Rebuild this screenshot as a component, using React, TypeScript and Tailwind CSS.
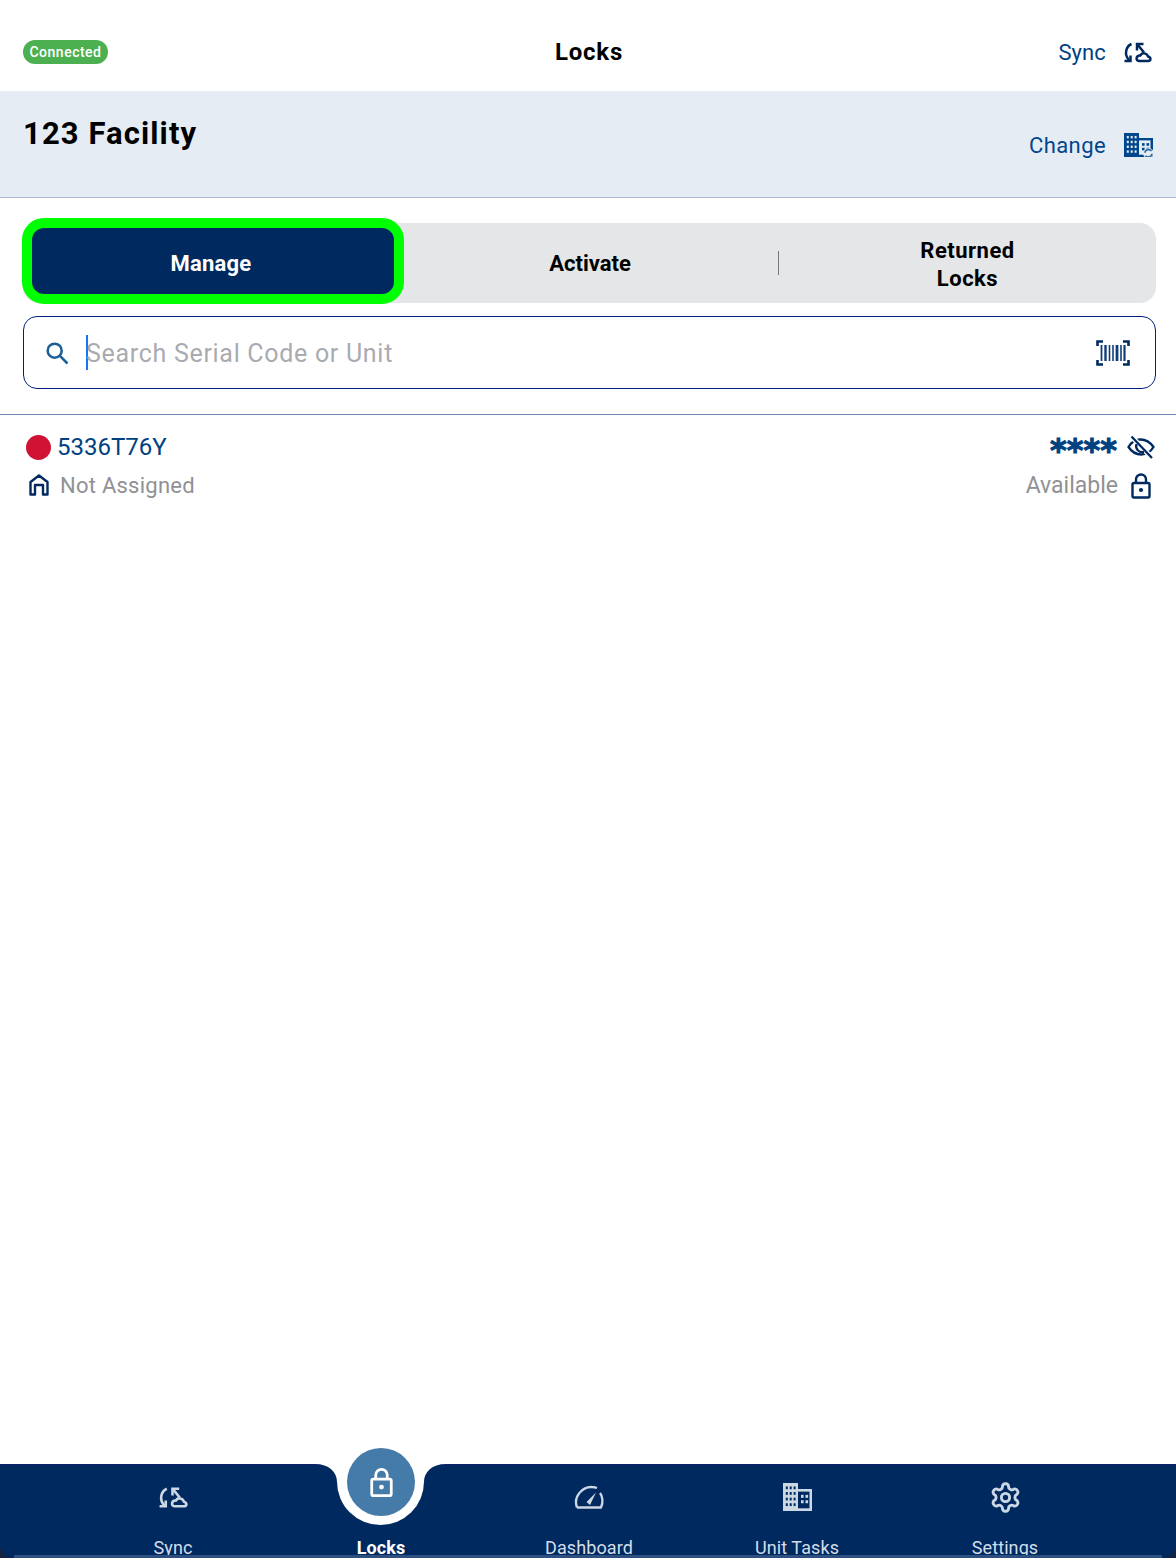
import React from "react";

const font = { fontFamily: '"Roboto", "Liberation Sans", sans-serif' };

function SyncIcon({ className }: { className?: string }) {
  return (
    <svg viewBox="0 0 29 21" className={className} fill="none" stroke="currentColor" strokeWidth="2.5" strokeLinejoin="round">
      <path d="M8.5 2 C3 4.5 0.5 12.5 6.5 18.5" />
      <path d="M1.5 19 H7.5 V13.5" strokeLinejoin="miter" />
      <path d="M20.5 2 H14 V8.5" strokeLinejoin="miter" />
      <path d="M14.5 2.5 L21 10.5" />
      <path d="M16.5 19 H25 C28 19 28.5 15.5 25 14.5 C24 11 19 10 17.5 13.5 C13 13 12 19 16.5 19 Z" />
    </svg>
  );
}

function BuildingIcon({ className, badge }: { className?: string; badge?: boolean }) {
  const cells: React.ReactNode[] = [];
  for (let r = 0; r < 4; r++)
    for (let c = 0; c < 3; c++)
      cells.push(<rect key={`${r}-${c}`} x={2.8 + c * 3.9} y={3.2 + r * 5.2} width="2" height="2.6" fill="var(--bg)" />);
  return (
    <svg viewBox="0 0 29 26" preserveAspectRatio="none" className={className} fill="currentColor">
      <path d="M0 0 H15 V5.5 H29 V26 H0 Z" />
      {cells}
      <rect x="15" y="8" width="11.5" height="15.5" fill="var(--bg)" />
      <rect x="18" y="11" width="2.6" height="2.8" />
      <rect x="22.5" y="11" width="2.6" height="2.8" />
      <rect x="18" y="16" width="2.6" height="2.8" />
      <rect x="22.5" y="16" width="2.6" height="2.8" />
      {badge && (
        <g fill="none" stroke="#2f6a9f" strokeWidth="1.7">
          <circle cx="24.5" cy="22" r="5.5" fill="var(--bg)" stroke="none" />
          <path d="M21 21.5 A3.6 3.6 0 0 1 27.5 19.5" />
          <path d="M28 22.5 A3.6 3.6 0 0 1 21.5 24.5" />
        </g>
      )}
    </svg>
  );
}

function LockIcon({ className }: { className?: string }) {
  return (
    <svg viewBox="0 0 20 26" className={className} fill="none" stroke="currentColor" strokeWidth="2.4" strokeLinejoin="round">
      <rect x="1.5" y="10" width="17" height="14.5" rx="1.5" />
      <path d="M5 10 V6.5 A5 5 0 0 1 15 6.5 V10" />
      <circle cx="10" cy="17" r="2.1" fill="currentColor" stroke="none" />
    </svg>
  );
}

function TabItem({ label, children, bold }: { label: string; children?: React.ReactNode; bold?: boolean }) {
  return (
    <div className="flex flex-col items-center w-[208px] h-full pt-[17px]">
      <div className="h-[30px] flex items-center justify-center">{children}</div>
      <span className={`mt-[26px] text-[18px] leading-[20px] tracking-[0.1px] ${bold ? "font-bold text-white" : "text-[#d3dde9]"}`}>{label}</span>
    </div>
  );
}

export default function App() {
  return (
    <div style={font} className="relative w-[1176px] h-[1558px] bg-white overflow-hidden flex flex-col">
      <header className="h-[91px] shrink-0 flex items-center justify-between pl-[23px] pr-[24px] pt-[13px] relative">
        <span className="bg-[#4caf50] text-white text-[14px] tracking-[0.5px] leading-[24px] h-[24px] w-[85px] rounded-full text-center font-medium">Connected</span>
        <span className="absolute left-0 right-0 text-center text-[24px] tracking-[0.8px] pl-[2px] font-bold text-black pointer-events-none">Locks</span>
        <div className="flex items-center gap-[17px] text-[#00417f]">
          <span className="text-[22px] tracking-[0.1px]">Sync</span>
          <SyncIcon className="w-[29px] h-[21px] text-[#002a5f]" />
        </div>
      </header>

      <section className="h-[107px] shrink-0 bg-[#e5ecf3] border-b border-[#b0bdd0] flex justify-between pl-[23px] pr-[23px]">
        <h1 className="text-[31px] leading-[38px] tracking-[1.1px] font-bold text-black mt-[24px]">123 Facility</h1>
        <div className="flex items-center gap-[18px] text-[#00468c] h-[30px] mt-[39px]" style={{ ["--bg" as string]: "#e5ecf3" }}>
          <span className="text-[22px] tracking-[0.4px]">Change</span>
          <BuildingIcon badge className="w-[29px] h-[24px] text-[#00468c]" />
        </div>
      </section>

      <div className="mt-[25px] ml-[23px] mr-[20px] h-[80px] rounded-[16px] bg-[#e5e6e8] flex items-center relative">
        <button className="absolute left-[-1px] top-[-5px] w-[382px] h-[86px] rounded-[22px] bg-[#002a5f] border-[10px] border-[#00ff00] text-white text-[22px] tracking-[0.2px] font-bold pt-[4px] pr-[4px]">Manage</button>
        <div className="w-[379px] shrink-0" />
        <div className="w-[376px] text-center text-[22px] font-bold text-black">Activate</div>
        <div className="w-px h-[24px] bg-[#77797c]" />
        <div className="flex-1 text-center text-[22px] leading-[28px] tracking-[0.5px] font-bold text-black pt-[3px]">Returned<br />Locks</div>
      </div>

      <div className="mt-[13px] ml-[23px] mr-[20px] h-[73px] rounded-[14px] border-[1.5px] border-[#00207f] flex items-center pl-[19px] pr-[25px]">
        <svg viewBox="0 0 24 24" className="w-[28px] h-[28px] text-[#1f5f97]" fill="none" stroke="currentColor" strokeWidth="2.2">
          <circle cx="10" cy="10" r="6" />
          <path d="M14.5 14.5 L21 21" />
        </svg>
        <div className="w-[2px] h-[35px] bg-[#1477f0] ml-[15px]" />
        <span className="flex-1 text-[25px] text-[#a9abb1] tracking-[0.7px] -ml-[2px] mt-[2px]">Search Serial Code or Unit</span>
        <svg viewBox="0 0 34 26" className="w-[34px] h-[26px] text-[#002a5f]" fill="none" stroke="currentColor" strokeWidth="2.6">
          <path d="M7 1.5 H1.5 V6 M27 1.5 H32.5 V6 M7 24.5 H1.5 V20 M27 24.5 H32.5 V20" />
          <g stroke="#0f3f7a">
            <path d="M5.5 5 V21" strokeWidth="1.8" /><path d="M9.5 5 V21" strokeWidth="2.4" /><path d="M13.5 5 V21" strokeWidth="1.6" />
            <path d="M17 5 V21" strokeWidth="1.6" /><path d="M21 5 V21" strokeWidth="2.8" /><path d="M25 5 V21" strokeWidth="1.6" /><path d="M28.5 5 V21" strokeWidth="2.2" />
          </g>
        </svg>
      </div>

      <div className="mt-[25px] h-px bg-[#6c8bb0] shrink-0" />

      <div className="flex justify-between pl-[26px] pr-[21px] pt-[17px]">
        <div className="flex flex-col">
          <div className="flex items-center h-[30px] gap-[6px]">
            <span className="w-[25px] h-[25px] rounded-full bg-[#d01234]" />
            <span className="text-[24px] text-[#00417f]">5336T76Y</span>
          </div>
          <div className="flex items-center h-[28px] mt-[9px] gap-[11px] pl-[3px]">
            <svg viewBox="0 0 20 22" className="w-[20px] h-[22px] text-[#002a5f]" fill="none" stroke="currentColor" strokeWidth="2.4" strokeLinejoin="round">
              <path d="M1.5 20.5 V8 L10 1.5 L18.5 8 V20.5 H14 V11 H6 V20.5 Z" />
            </svg>
            <span className="text-[22px] tracking-[0.25px] text-[#909194]">Not Assigned</span>
          </div>
        </div>
        <div className="flex flex-col items-end">
          <div className="flex items-center h-[30px] gap-[10px]">
            <span style={{ fontFamily: '"DejaVu Sans", sans-serif' }} className="text-[#00417f] text-[32px] font-bold leading-[30px] h-[30px] pt-[3px] [-webkit-text-stroke:1px_#00417f]">****</span>
            <svg viewBox="0 0 28 24" className="w-[28px] h-[24px] text-[#002a5f]" fill="none" stroke="currentColor" strokeWidth="2.3">
              <path d="M1.5 12 C7 2.5 19 1.5 26.5 12 C20.5 22 8 22 1.5 12 Z" />
              <path d="M4.5 1.5 L25 23" stroke="#ffffff" strokeWidth="5" />
              <path d="M4.5 1.5 L25 23" />
              <path d="M9.5 9 C8 14 12 18 17 17" />
            </svg>
          </div>
          <div className="flex items-center h-[28px] mt-[10px] gap-[13px] mr-[4px]">
            <span className="text-[23px] text-[#909194]">Available</span>
            <LockIcon className="w-[20px] h-[26px] text-[#002a5f]" />
          </div>
        </div>
      </div>

      <div className="absolute left-0 bottom-0 w-[14px] h-[14px] bg-[#14233f]" />
      <div className="absolute right-0 bottom-0 w-[14px] h-[14px] bg-[#14233f]" />
      <nav className="absolute left-0 right-0 bottom-0 h-[94px] bg-[#002a5f] rounded-b-[14px] border-t border-[#10206a] flex overflow-visible text-center">
        <div className="w-[69px]" />
        <TabItem label="Sync"><SyncIcon className="w-[30px] h-[23px] text-[#cdd8e5]" /></TabItem>
        <TabItem label="Locks" bold />
        <TabItem label="Dashboard">
          <svg viewBox="0 0 30 24" className="w-[30px] h-[24px] text-[#cdd8e5]" fill="none" stroke="currentColor" strokeWidth="2.3" strokeLinejoin="round">
            <path d="M3 22.5 H27 C29.5 17 28.5 11 26 8" />
            <path d="M3 22.5 C-1 12 8 1.5 18 2 C20 2 21.5 2.5 23 3" />
            <path d="M12.5 17 L22 7.5 L16 20 Z" fill="currentColor" stroke="none" />
          </svg>
        </TabItem>
        <TabItem label="Unit Tasks"><span style={{ ["--bg" as string]: "#002a5f" }}><BuildingIcon className="w-[29px] h-[28px] text-[#cdd8e5] block" /></span></TabItem>
        <TabItem label="Settings">
          <svg viewBox="0 0 24 24" className="w-[33px] h-[33px] text-[#cdd8e5]" fill="none" stroke="currentColor" strokeWidth="2.1" strokeLinejoin="round" strokeLinecap="round">
            <path d="M12.22 2h-.44a2 2 0 0 0-2 2v.18a2 2 0 0 1-1 1.73l-.43.25a2 2 0 0 1-2 0l-.15-.08a2 2 0 0 0-2.73.73l-.22.38a2 2 0 0 0 .73 2.73l.15.1a2 2 0 0 1 1 1.72v.51a2 2 0 0 1-1 1.74l-.15.09a2 2 0 0 0-.73 2.73l.22.38a2 2 0 0 0 2.73.73l.15-.08a2 2 0 0 1 2 0l.43.25a2 2 0 0 1 1 1.73V20a2 2 0 0 0 2 2h.44a2 2 0 0 0 2-2v-.18a2 2 0 0 1 1-1.73l.43-.25a2 2 0 0 1 2 0l.15.08a2 2 0 0 0 2.73-.73l.22-.39a2 2 0 0 0-.73-2.73l-.15-.08a2 2 0 0 1-1-1.74v-.5a2 2 0 0 1 1-1.74l.15-.09a2 2 0 0 0 .73-2.73l-.22-.38a2 2 0 0 0-2.73-.73l-.15.08a2 2 0 0 1-2 0l-.43-.25a2 2 0 0 1-1-1.73V4a2 2 0 0 0-2-2z" />
            <circle cx="12" cy="12" r="3" />
          </svg>
        </TabItem>

        <div className="absolute left-[337px] top-[-1px] w-[87px] h-[61px] bg-white rounded-b-[44px]" />
        <div className="absolute left-[315px] top-[-1px] w-[22px] h-[18px] bg-white [clip-path:path('M0_0H22V18C22_8_14_0_0_0Z')]" />
        <div className="absolute left-[424px] top-[-1px] w-[22px] h-[18px] bg-white [clip-path:path('M22_0H0V18C0_8_8_0_22_0Z')]" />
        <div className="absolute left-[347px] top-[-17px] w-[68px] h-[68px] rounded-full bg-[#447ba8] flex items-center justify-center">
          <LockIcon className="w-[23px] h-[31px] text-white" />
        </div>
        <div className="absolute left-[14px] right-[14px] bottom-0 h-[3px] bg-[#2e5080]" />
      </nav>
    </div>
  );
}
